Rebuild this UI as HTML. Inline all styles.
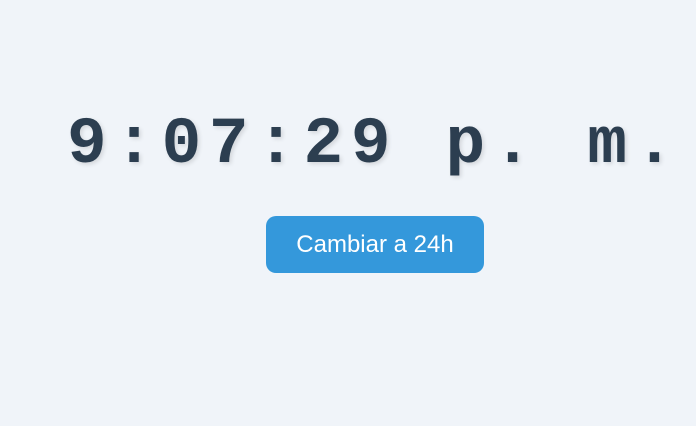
<!DOCTYPE html>
<html><head><style>
html,body{margin:0;width:696px;height:426px;background:#f0f4f9;overflow:hidden;font-family:"Liberation Sans",sans-serif}
.t{position:absolute;left:67px;top:104px;font-family:"Liberation Mono",monospace;font-weight:bold;font-size:66px;line-height:82px;letter-spacing:7.7px;color:#2c3e50;white-space:nowrap;text-shadow:2px 2px 4px rgba(0,0,0,.12)}
.b{position:absolute;left:266px;top:216px;width:218px;height:57px;background:#3498db;border-radius:10px;color:#fff;font-size:24px;line-height:57px;text-align:center}
</style></head><body>
<div class="t">9:07:29 p. m.</div>
<div class="b">Cambiar a 24h</div>
</body></html>
